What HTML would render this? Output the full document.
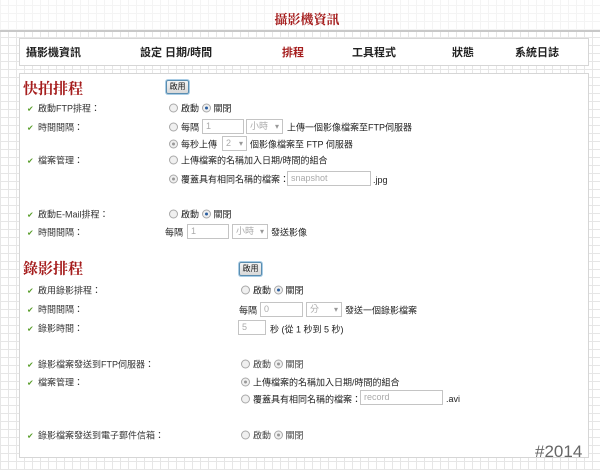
<!DOCTYPE html>
<html><head><meta charset="utf-8"><style>
*{margin:0;padding:0;box-sizing:border-box}
body{width:600px;height:470px;position:relative;overflow:hidden;background-color:#fff;
background-image:repeating-linear-gradient(0deg,#e6e6e6 0 1px,transparent 1px 8px),repeating-linear-gradient(90deg,#e6e6e6 0 1px,transparent 1px 8px);
font-family:"Liberation Sans","Noto Sans CJK TC",sans-serif;color:#222;font-size:9px}
.a{position:absolute;white-space:nowrap}
.top{position:absolute;left:0;top:0;width:600px;height:32px;background:rgba(255,255,255,.55);border-bottom:2px solid #c8c8c8}
.box{position:absolute;background:#fff;border:1px solid #d6d6d6}
.t{transform:translateY(-50%)}
.nav{font-size:11px;font-weight:bold;color:#222}
.h{font-size:15px;font-weight:bold;color:#a51d1d;font-family:"Liberation Serif","Noto Serif CJK SC",serif}
.btn{position:absolute;border:1px solid #5a8db0;border-radius:2px;background:linear-gradient(#f4f4f4,#d8d8d8);font-size:8px;width:23px;height:14px;text-align:center;line-height:12px;box-shadow:0 0 0 1px #a9cde6}
.ck{display:inline-block;width:7px;height:5px;margin-right:4px;color:#5a9e2c;font-size:8px}
.r{display:inline-block;width:9px;height:9px;border:1px solid #a8a8a8;border-radius:50%;background:#f0f0f0;vertical-align:-1px;margin-right:3px;position:relative}
.r.on::after{content:"";position:absolute;left:2px;top:2px;width:3px;height:3px;border-radius:50%;background:#2a5ea0}
.r.g::after{content:"";position:absolute;left:2px;top:2px;width:3px;height:3px;border-radius:50%;background:#999}
.in{position:absolute;border:1px solid #c4c4c4;background:#fff;height:15px;color:#aaa;font-size:9px;padding-left:3px;line-height:13px}
.sel::after{content:"▾";position:absolute;right:3px;top:0;color:#999;font-size:8px}
.lb{color:#333}
</style></head><body>
<div class="top"></div>
<div class="a" style="left:0;width:614px;text-align:center;top:9px;font-size:13px;font-weight:bold;color:#a51d1d;font-family:'Liberation Serif','Noto Serif CJK SC',serif">攝影機資訊</div>
<div class="box" style="left:19px;top:38px;width:570px;height:28px"></div>
<div class="a nav t" style="left:26px;top:52px">攝影機資訊</div>
<div class="a nav t" style="left:140px;top:52px">設定 日期/時間</div>
<div class="a nav t" style="left:282px;top:52px;color:#a51d1d">排程</div>
<div class="a nav t" style="left:352px;top:52px">工具程式</div>
<div class="a nav t" style="left:452px;top:52px">狀態</div>
<div class="a nav t" style="left:515px;top:52px">系統日誌</div>
<div class="box" style="left:19px;top:73px;width:570px;height:385px"></div>

<div class="a h t" style="left:23px;top:88px">快拍排程</div>
<div class="btn" style="left:166px;top:80px">啟用</div>

<div class="a t lb" style="left:27px;top:108px"><span class="ck">✔</span>啟動FTP排程：</div>
<div class="a t" style="left:169px;top:108px"><span class="r"></span>啟動 <span class="r on"></span>關閉</div>
<div class="a t lb" style="left:27px;top:127px"><span class="ck">✔</span>時間間隔：</div>
<div class="a t" style="left:169px;top:127px"><span class="r"></span>每隔</div>
<div class="in" style="left:202px;top:119px;width:42px">1</div>
<div class="in sel" style="left:246px;top:119px;width:37px">小時</div>
<div class="a t" style="left:287px;top:127px">上傳一個影像檔案至FTP伺服器</div>
<div class="a t" style="left:169px;top:144px"><span class="r g"></span>每秒上傳</div>
<div class="in sel" style="left:222px;top:136px;width:25px">2</div>
<div class="a t" style="left:250px;top:144px">個影像檔案至 FTP 伺服器</div>
<div class="a t lb" style="left:27px;top:160px"><span class="ck">✔</span>檔案管理：</div>
<div class="a t" style="left:169px;top:160px"><span class="r"></span>上傳檔案的名稱加入日期/時間的組合</div>
<div class="a t" style="left:169px;top:179px"><span class="r g"></span>覆蓋具有相同名稱的檔案：</div>
<div class="in" style="left:287px;top:171px;width:84px">snapshot</div>
<div class="a t" style="left:373px;top:180px">.jpg</div>

<div class="a t lb" style="left:27px;top:214px"><span class="ck">✔</span>啟動E-Mail排程：</div>
<div class="a t" style="left:169px;top:214px"><span class="r"></span>啟動 <span class="r on"></span>關閉</div>
<div class="a t lb" style="left:27px;top:232px"><span class="ck">✔</span>時間間隔：</div>
<div class="a t" style="left:165px;top:232px">每隔</div>
<div class="in" style="left:187px;top:224px;width:42px">1</div>
<div class="in sel" style="left:232px;top:224px;width:36px">小時</div>
<div class="a t" style="left:271px;top:232px">發送影像</div>

<div class="a h t" style="left:23px;top:268px">錄影排程</div>
<div class="btn" style="left:239px;top:262px">啟用</div>
<div class="a t lb" style="left:27px;top:290px"><span class="ck">✔</span>啟用錄影排程：</div>
<div class="a t" style="left:241px;top:290px"><span class="r"></span>啟動 <span class="r on"></span>關閉</div>
<div class="a t lb" style="left:27px;top:309px"><span class="ck">✔</span>時間間隔：</div>
<div class="a t" style="left:239px;top:310px">每隔</div>
<div class="in" style="left:260px;top:302px;width:43px">0</div>
<div class="in sel" style="left:306px;top:302px;width:36px">分</div>
<div class="a t" style="left:345px;top:310px">發送一個錄影檔案</div>
<div class="a t lb" style="left:27px;top:328px"><span class="ck">✔</span>錄影時間：</div>
<div class="in" style="left:238px;top:320px;width:28px">5</div>
<div class="a t" style="left:270px;top:329px">秒 (從 1 秒到 5 秒)</div>

<div class="a t lb" style="left:27px;top:364px"><span class="ck">✔</span>錄影檔案發送到FTP伺服器：</div>
<div class="a t" style="left:241px;top:364px;color:#444"><span class="r"></span>啟動 <span class="r g"></span>關閉</div>
<div class="a t lb" style="left:27px;top:382px"><span class="ck">✔</span>檔案管理：</div>
<div class="a t" style="left:241px;top:382px"><span class="r g"></span>上傳檔案的名稱加入日期/時間的組合</div>
<div class="a t" style="left:241px;top:399px"><span class="r"></span>覆蓋具有相同名稱的檔案：</div>
<div class="in" style="left:360px;top:390px;width:83px">record</div>
<div class="a t" style="left:446px;top:399px">.avi</div>
<div class="a t lb" style="left:27px;top:435px"><span class="ck">✔</span>錄影檔案發送到電子郵件信箱：</div>
<div class="a t" style="left:241px;top:435px;color:#444"><span class="r"></span>啟動 <span class="r g"></span>關閉</div>

<div class="a t" style="left:535px;top:452px;font-size:17px;color:#666">#2014</div>
</body></html>
